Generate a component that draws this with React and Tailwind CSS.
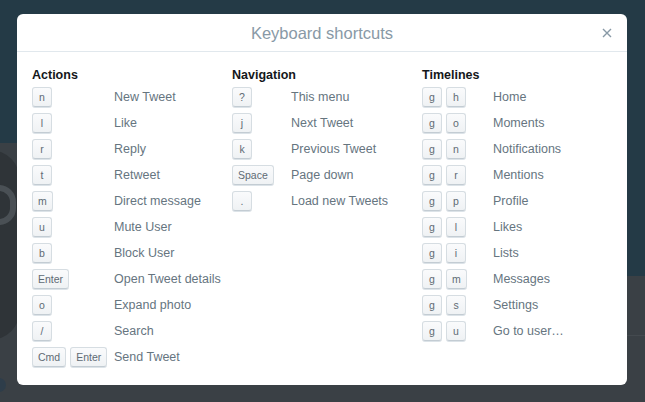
import React from "react";

const actions = [
  [["n"], "New Tweet"],
  [["l"], "Like"],
  [["r"], "Reply"],
  [["t"], "Retweet"],
  [["m"], "Direct message"],
  [["u"], "Mute User"],
  [["b"], "Block User"],
  [["Enter"], "Open Tweet details"],
  [["o"], "Expand photo"],
  [["/"], "Search"],
  [["Cmd", "Enter"], "Send Tweet"],
];
const navigation = [
  [["?"], "This menu"],
  [["j"], "Next Tweet"],
  [["k"], "Previous Tweet"],
  [["Space"], "Page down"],
  [["."], "Load new Tweets"],
];
const timelines = [
  [["g", "h"], "Home"],
  [["g", "o"], "Moments"],
  [["g", "n"], "Notifications"],
  [["g", "r"], "Mentions"],
  [["g", "p"], "Profile"],
  [["g", "l"], "Likes"],
  [["g", "i"], "Lists"],
  [["g", "m"], "Messages"],
  [["g", "s"], "Settings"],
  [["g", "u"], "Go to user…"],
];

function Key({ k }) {
  return (
    <span className="inline-flex h-[20px] min-w-[20px] items-center justify-center rounded-[3px] border border-[#d6dde2] border-b-[#c3ccd3] bg-gradient-to-b from-[#fafbfc] to-[#eff2f4] px-[5px] text-[10.5px] leading-none text-[#5f6b74] shadow-[0_1px_0_#dce3e8]">
      {k}
    </span>
  );
}

function Column({ title, rows, keyW, className }) {
  return (
    <div className={className}>
      <div className="h-[19px] text-[12.5px] font-bold leading-[15px] text-[#14171a]">{title}</div>
      <div className="flex flex-col">
        {rows.map(([keys, label]) => (
          <div key={label} className="flex h-[26px] items-start">
            <div className={`flex shrink-0 gap-[4px] ${keyW}`}>
              {keys.map((k, i) => (
                <Key key={i} k={k} />
              ))}
            </div>
            <div className="pt-[2px] text-[12.5px] leading-[16px] text-[#66757f]">{label}</div>
          </div>
        ))}
      </div>
    </div>
  );
}

export default function App() {
  return (
    <div
      className="relative h-[402px] w-[645px] overflow-hidden bg-[#3a4045]"
      style={{ fontFamily: '"Liberation Sans", Arial, sans-serif' }}
    >
      {/* dimmed page behind the modal */}
      <div className="absolute left-0 top-0 h-[143px] w-[645px] bg-[#243a46]" />
      <div className="absolute left-[300px] top-0 h-[276px] w-[345px] bg-[#243a46]" />
      <div className="absolute left-[-40px] top-[150px] h-[190px] w-[60px] rounded-full bg-[#2f3438]" />
      <div className="absolute left-[-18px] top-[185px] h-[40px] w-[34px] rounded-full border-[6px] border-[#4a5055]" />
      <div className="absolute left-[-8px] top-[378px] h-[14px] w-[14px] rounded-full bg-[#2e3d4a]" />
      <div className="absolute left-[627px] top-[335px] h-px w-[18px] bg-[#444a4f]" />

      {/* modal */}
      <div className="absolute left-[17px] top-[14px] flex h-[371px] w-[610px] flex-col rounded-[6px] bg-white">
        <div className="relative flex h-[38px] items-center justify-center border-b border-[#e1e8ed] pt-[2px]">
          <span className="text-[16.5px] leading-none text-[#8899a6]">Keyboard shortcuts</span>
          <svg
            className="absolute right-[15px] top-[14px]"
            width="10"
            height="10"
            viewBox="0 0 10 10"
          >
            <path d="M1 1L9 9M9 1L1 9" stroke="#8899a6" strokeWidth="1.4" />
          </svg>
        </div>
        <div className="flex px-[15px] pt-[16px]">
          <Column title="Actions" rows={actions} keyW="w-[82px]" className="w-[200px]" />
          <Column title="Navigation" rows={navigation} keyW="w-[59px]" className="w-[190px]" />
          <Column title="Timelines" rows={timelines} keyW="w-[71px]" className="flex-1" />
        </div>
      </div>
    </div>
  );
}
